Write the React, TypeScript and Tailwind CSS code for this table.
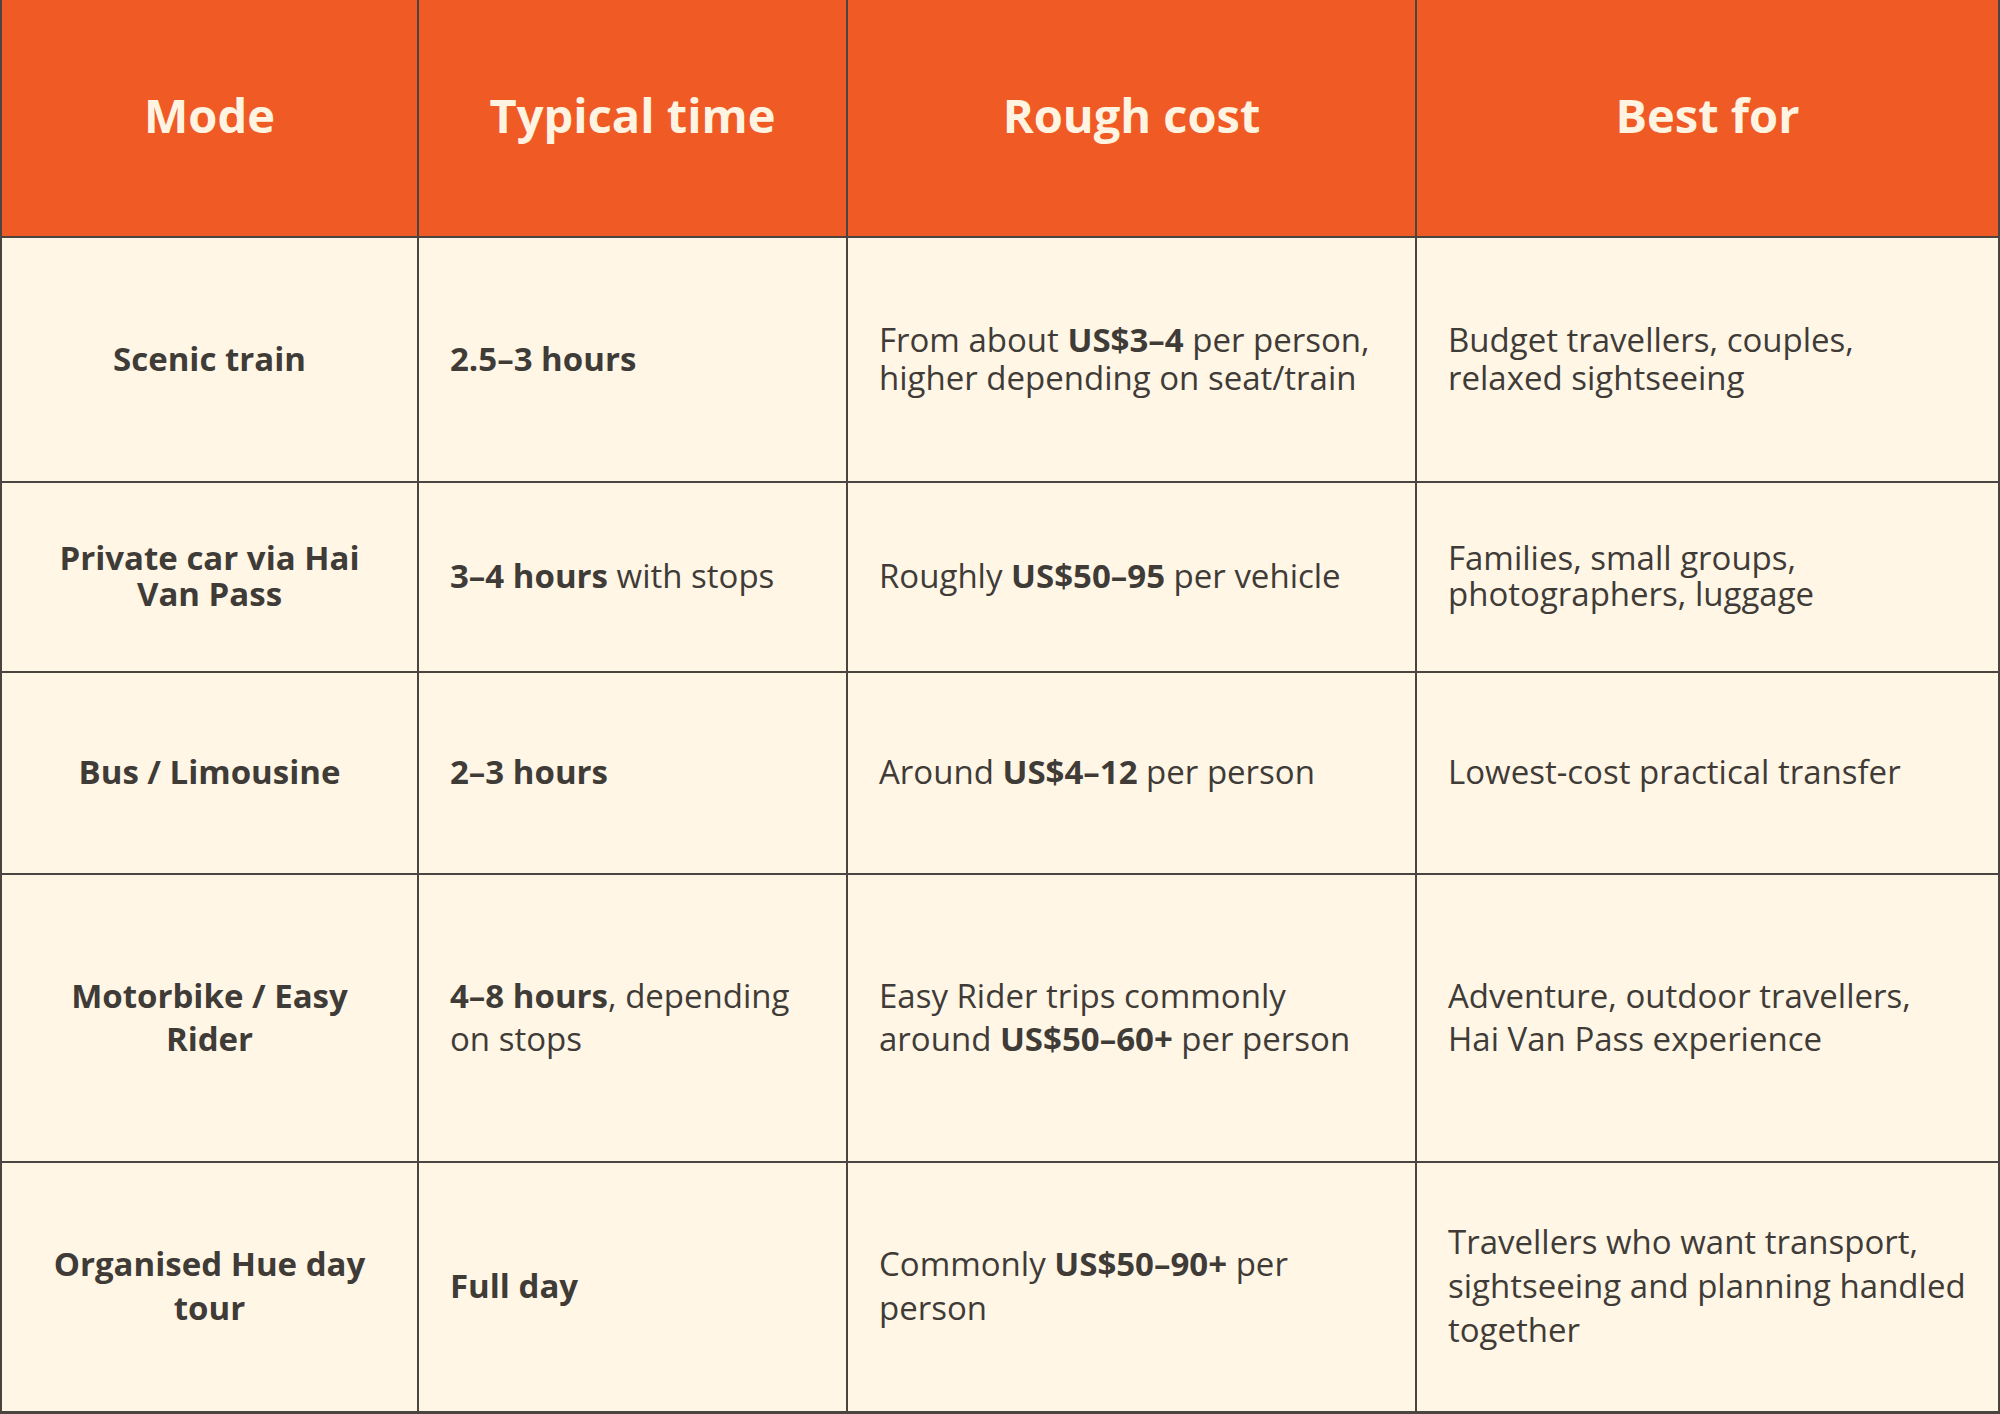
import React from "react";

type Row = {
  mode: React.ReactNode;
  time: React.ReactNode;
  cost: React.ReactNode;
  best: React.ReactNode;
  lh: string;
};

const rows: Row[] = [
  {
    mode: <>Scenic train</>,
    time: <b className="font-bold">2.5–3 hours</b>,
    cost: (
      <>
        From about <b className="font-bold">US$3–4</b> per person,
        <br />
        higher depending on seat/train
      </>
    ),
    best: (
      <>
        Budget travellers, couples,
        <br />
        relaxed sightseeing
      </>
    ),
    lh: "leading-[38px]",
  },
  {
    mode: (
      <>
        Private car via Hai
        <br />
        Van Pass
      </>
    ),
    time: (
      <>
        <b className="font-bold">3–4 hours</b> with stops
      </>
    ),
    cost: (
      <>
        Roughly <b className="font-bold">US$50–95</b> per vehicle
      </>
    ),
    best: (
      <>
        Families, small groups,
        <br />
        photographers, luggage
      </>
    ),
    lh: "leading-[36px]",
  },
  {
    mode: <>Bus / Limousine</>,
    time: <b className="font-bold">2–3 hours</b>,
    cost: (
      <>
        Around <b className="font-bold">US$4–12</b> per person
      </>
    ),
    best: <>Lowest-cost practical transfer</>,
    lh: "leading-[38px]",
  },
  {
    mode: (
      <>
        Motorbike / Easy
        <br />
        Rider
      </>
    ),
    time: (
      <>
        <b className="font-bold">4–8 hours</b>, depending
        <br />
        on stops
      </>
    ),
    cost: (
      <>
        Easy Rider trips commonly
        <br />
        around <b className="font-bold">US$50–60+</b> per person
      </>
    ),
    best: (
      <>
        Adventure, outdoor travellers,
        <br />
        Hai Van Pass experience
      </>
    ),
    lh: "leading-[43px]",
  },
  {
    mode: (
      <>
        Organised Hue day
        <br />
        tour
      </>
    ),
    time: <b className="font-bold">Full day</b>,
    cost: (
      <>
        Commonly <b className="font-bold">US$50–90+</b> per
        <br />
        person
      </>
    ),
    best: (
      <>
        Travellers who want transport,
        <br />
        sightseeing and planning handled
        <br />
        together
      </>
    ),
    lh: "leading-[44px]",
  },
];

const headers = ["Mode", "Typical time", "Rough cost", "Best for"];

export default function App() {
  return (
    <div
      className="w-[2000px] h-[1414px] bg-[#4a4541] overflow-hidden"
      style={{ fontFamily: '"Open Sans", "Noto Sans", sans-serif' }}
    >
      <div className="grid grid-cols-[415px_427px_567px_581px] grid-rows-[236px_243px_188px_200px_286px_248px] gap-[2px] pl-[2px] pr-[2px] pb-[2px]">
        {headers.map((h) => (
          <div
            key={h}
            className="bg-[#f05a24] flex items-center justify-center pb-[6px] text-[#fff4e2] text-[47px] font-bold leading-none"
          >
            {h}
          </div>
        ))}
        {rows.map((r, i) => (
          <React.Fragment key={i}>
            <div
              className={`bg-[#fff6e6] flex items-center justify-center text-center px-2 pb-[2px] text-[33px] font-bold text-[#3f3b37] ${r.lh}`}
            >
              <div>{r.mode}</div>
            </div>
            <div
              className={`bg-[#fff6e6] flex items-center pl-[31px] pr-2 pb-[2px] text-[33px] text-[#3f3b37] whitespace-nowrap ${r.lh}`}
            >
              <div>{r.time}</div>
            </div>
            <div
              className={`bg-[#fff6e6] flex items-center pl-[31px] pr-2 pb-[2px] text-[33px] text-[#3f3b37] whitespace-nowrap ${r.lh}`}
            >
              <div>{r.cost}</div>
            </div>
            <div
              className={`bg-[#fff6e6] flex items-center pl-[31px] pr-2 pb-[2px] text-[33px] text-[#3f3b37] whitespace-nowrap ${r.lh}`}
            >
              <div>{r.best}</div>
            </div>
          </React.Fragment>
        ))}
      </div>
    </div>
  );
}
